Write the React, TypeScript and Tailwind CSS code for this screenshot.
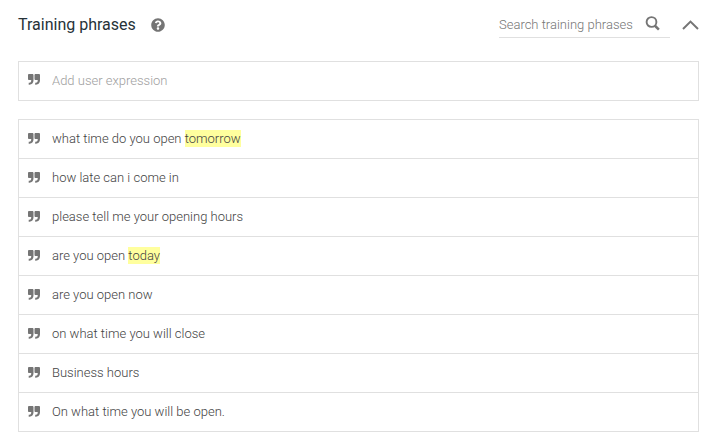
import { useState } from "react";
import { FaQuestionCircle } from "react-icons/fa";

type Part = { text: string; marked?: boolean };

const phrases: Part[][] = [
  [{ text: "what time do you open " }, { text: "tomorrow", marked: true }],
  [{ text: "how late can i come in" }],
  [{ text: "please tell me your opening hours" }],
  [{ text: "are you open " }, { text: "today", marked: true }],
  [{ text: "are you open now" }],
  [{ text: "on what time you will close" }],
  [{ text: "Business hours" }],
  [{ text: "On what time you will be open." }],
];

function Quote() {
  return (
    <svg viewBox="0 0 12 12" className="h-3 w-3 shrink-0 text-[#757575]" fill="currentColor" aria-hidden="true">
      <path d="M1 0h3.400c.6 0 1.100.5 1.100 1.100v5.200c0 2.600-1.600 4.400-4.100 4.500H.7V8.700h.7c1.100 0 1.800-.7 1.800-1.900v-.7H1.100C.5 6.100 0 5.600 0 5V1.100C0 .5.500 0 1 0z" />
      <path d="M7.600 0h3.300c.6 0 1.100.5 1.100 1.100v5.200c0 2.600-1.600 4.400-4.100 4.500h-.7V8.700h.7c1.100 0 1.800-.7 1.800-1.900v-.7H7.600c-.6 0-1.100-.5-1.100-1.100V1.100C6.500.5 7 0 7.600 0z" />
    </svg>
  );
}

export default function App() {
  const [open, setOpen] = useState(true);

  return (
    <main className="bg-white px-[18px] pt-3 pr-[22px] pb-2 font-['Roboto',sans-serif] text-[13px] font-light text-[#424242]">
      <header className="flex h-[26px] items-stretch">
        <div className="flex items-center gap-[15px]">
          <h2 className="text-base font-normal text-[#263238]">Training phrases</h2>
          <button type="button" aria-label="Help" className="text-[#757575]">
            <FaQuestionCircle className="h-3.5 w-3.5" />
          </button>
        </div>
        <div className="ml-auto flex w-[171px] items-center border-b border-[#e0e0e0]">
          <input
            type="text"
            aria-label="Search training phrases"
            placeholder="Search training phrases"
            className="h-6 min-w-0 flex-1 bg-transparent outline-none placeholder:text-[#757575] placeholder:opacity-100"
          />
          <button type="button" aria-label="Search" className="mr-2.5 pb-0.5 text-[#757575]">
            <svg viewBox="0 0 15 15" className="h-[15px] w-[15px]" fill="none" stroke="currentColor">
              <circle cx="6.500" cy="6" r="4.900" strokeWidth="1.900" />
              <path d="m9.700 9.500 4.200 4.100" strokeWidth="2.500" />
            </svg>
          </button>
        </div>
        <button
          type="button"
          aria-label="Toggle training phrases"
          aria-expanded={open}
          onClick={() => setOpen(!open)}
          className="ml-3 flex items-center text-[#757575]"
        >
          <svg viewBox="0 0 17 10" className="h-2.5 w-[17px]" fill="none" stroke="currentColor" strokeWidth="2">
            <path d="M1 9 8.500 1.600 16 9" />
          </svg>
        </button>
      </header>

      <label className="mt-[23px] flex h-10 items-center gap-3 border border-[#e0e0e0] pb-0.5 pl-[9px]">
        <Quote />
        <input
          type="text"
          aria-label="Add user expression"
          placeholder="Add user expression"
          className="h-8 min-w-0 flex-1 bg-transparent outline-none placeholder:text-[#9e9e9e] placeholder:opacity-100"
        />
      </label>

      {open && (
        <ul className="mt-[18px] divide-y divide-[#e0e0e0] border border-[#e0e0e0]">
          {phrases.map((parts, i) => (
            <li key={i} className="flex h-[39px] items-center gap-3 pl-[9px] last:h-[38px]">
              <Quote />
              <p className="leading-5">
                {parts.map((part, j) =>
                  part.marked ? (
                    <mark key={j} className="bg-[#ffff9e] py-px text-inherit">
                      {part.text}
                    </mark>
                  ) : (
                    <span key={j}>{part.text}</span>
                  ),
                )}
              </p>
            </li>
          ))}
        </ul>
      )}
    </main>
  );
}
